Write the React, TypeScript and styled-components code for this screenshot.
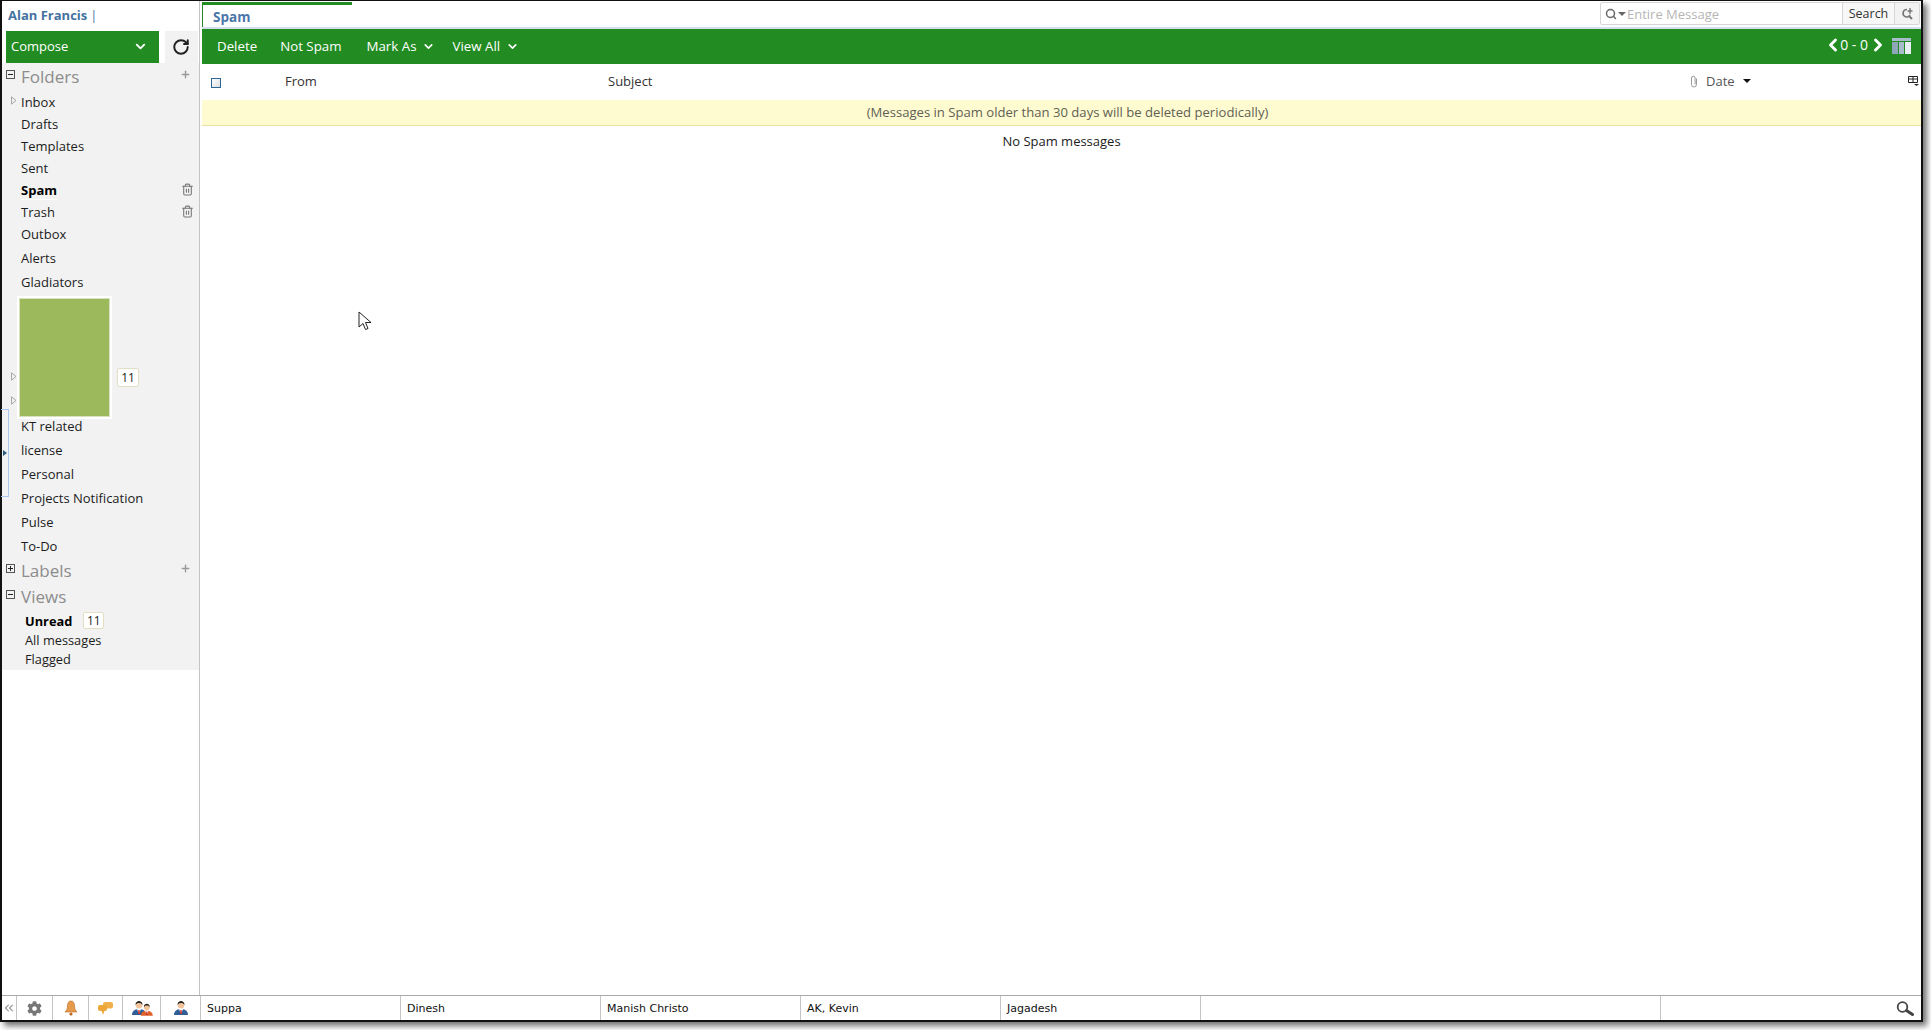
import React from 'react'
import styled, { createGlobalStyle } from 'styled-components'
import { ChevronDown, ChevronLeft, ChevronRight, ChevronsLeft, RotateCw, Plus, Trash2, Search } from 'lucide-react'
import { FaCog } from 'react-icons/fa'

const GlobalStyle = createGlobalStyle`
  html, body {
    margin: 0;
    padding: 0;
    background: #fff;
    overflow: hidden;
  }
  body {
    font-family: "Open Sans", "Liberation Sans", sans-serif;
    font-size: 13px;
    color: #1c1c1c;
  }
`

const Desktop = styled.div`
  width: 1931px;
  height: 1030px;
  box-sizing: border-box;
`

const AppWindow = styled.div`
  width: 1923px;
  height: 1022px;
  box-sizing: border-box;
  border: 1px solid #111;
  border-left-width: 2px;
  border-right-width: 2px;
  border-bottom-width: 2px;
  box-shadow: 4px 4px 6px rgba(0, 0, 0, 0.55);
  display: flex;
  flex-direction: column;
  background: #fff;
  position: relative;
`

const Main = styled.div`
  flex: 1;
  display: flex;
  min-height: 0;
`

const Sidebar = styled.aside`
  width: 197px;
  flex: none;
  border-right: 1px solid #c4c4c4;
  display: flex;
  flex-direction: column;
`

const UserName = styled.div`
  height: 30px;
  padding: 0 0 2px 6px;
  box-sizing: border-box;
  display: flex;
  align-items: center;
  font-weight: 700;
  font-size: 13px;
  color: #45729f;
  span {
    font-weight: 400;
    margin-left: 3px;
  }
`

const ComposeRow = styled.div`
  display: flex;
  height: 32px;
  padding-left: 4px;
  gap: 6px;
`

const ComposeButton = styled.div`
  width: 153px;
  background: #228b22;
  color: #fff;
  font-size: 13px;
  display: flex;
  align-items: center;
  justify-content: space-between;
  padding: 0 11px 2px 5px;
  box-sizing: border-box;
`

const RefreshButton = styled.div`
  width: 33px;
  background: #f2f2f2;
  display: flex;
  align-items: center;
  justify-content: center;
  padding-right: 2px;
  box-sizing: border-box;
  color: #222;
`

const Tree = styled.div`
  background: #f2f2f2;
  height: 607px;
  display: flex;
  flex-direction: column;
  position: relative;
`

const SectionHead = styled.div<{ $height: number }>`
  height: ${(p) => p.$height}px;
  display: flex;
  align-items: center;
  padding: 0 8px 2px 4px;
  box-sizing: border-box;
  font-size: 17px;
  color: #8c8c8c;
  flex: none;
`

const Toggle = styled.span`
  width: 7px;
  height: 7px;
  border: 1px solid #555;
  margin-right: 6px;
  position: relative;
  flex: none;
  top: -2px;
  &::before {
    content: '';
    position: absolute;
    left: 1px;
    right: 1px;
    top: 3px;
    height: 1px;
    background: #222;
  }
`

const PlusToggle = styled(Toggle)`
  &::after {
    content: '';
    position: absolute;
    top: 1px;
    bottom: 1px;
    left: 3px;
    width: 1px;
    background: #222;
  }
`

const HeadLabel = styled.span`
  flex: 1;
`

const AddIcon = styled(Plus)`
  color: #999;
  position: relative;
  top: -2px;
`

const FolderRow = styled.div<{ $height: number; $bold?: boolean }>`
  height: ${(p) => p.$height}px;
  display: flex;
  align-items: center;
  padding: 0 5px 0 19px;
  font-size: 13px;
  font-weight: ${(p) => (p.$bold ? 700 : 400)};
  color: ${(p) => (p.$bold ? '#000' : '#1c1c1c')};
  flex: none;
  position: relative;
`

const FolderLabel = styled.span<{ $underline?: boolean }>`
  margin-right: auto;
  border-bottom: 1px solid ${(p) => (p.$underline ? '#fff' : 'transparent')};
`

const TrashIcon = styled(Trash2)`
  color: #777;
  position: relative;
  top: -1px;
`

const Caret = styled.svg<{ $top: number }>`
  position: absolute;
  left: 9px;
  top: ${(p) => p.$top}px;
`

const MaskedRow = styled.div`
  height: 123px;
  flex: none;
  position: relative;
  display: flex;
  align-items: center;
  padding-left: 15px;
  margin: 2px 0 -5px;
`

const MaskBlock = styled.div`
  width: 89px;
  height: 117px;
  background: #9cba5c;
  border: 3px solid #fff;
  outline: 1px solid #d6e1bd;
  outline-offset: -3px;
  box-sizing: content-box;
`

const Count = styled.span`
  display: inline-flex;
  align-items: center;
  justify-content: center;
  width: 21px;
  height: 17px;
  background: #fff;
  border: 1px solid #e3dfc6;
  border-radius: 2px;
  font-size: 12px;
  font-weight: 400;
  color: #1c1c1c;
  box-sizing: border-box;
`

const MaskCount = styled(Count)`
  width: 22px;
  height: 19px;
  margin-left: 5px;
  margin-top: 40px;
`

const SideHandle = styled.div`
  position: absolute;
  left: -1px;
  top: 346px;
  width: 8px;
  height: 88px;
  border: 1px solid #a9c8ee;
  border-left: none;
  box-sizing: border-box;
  display: flex;
  align-items: center;
  &::after {
    content: '';
    border-left: 4px solid #2b5b7c;
    border-top: 3px solid transparent;
    border-bottom: 3px solid transparent;
    margin-left: 2px;
  }
`

const ViewRow = styled.div<{ $bold?: boolean }>`
  height: 19px;
  display: flex;
  align-items: center;
  padding-left: 23px;
  gap: 11px;
  font-size: 12.8px;
  font-weight: ${(p) => (p.$bold ? 700 : 400)};
  color: ${(p) => (p.$bold ? '#000' : '#1c1c1c')};
  flex: none;
`

const Content = styled.section`
  flex: 1;
  min-width: 0;
  display: flex;
  flex-direction: column;
  padding-left: 2px;
`

const TabBar = styled.div`
  height: 28px;
  flex: none;
  display: flex;
  justify-content: space-between;
  border-bottom: 2px solid #d4def0;
  box-sizing: border-box;
`

const ActiveTab = styled.div`
  width: 150px;
  margin-top: 1px;
  border-top: 3px solid #228b22;
  border-left: 1px solid #228b22;
  padding: 1px 0 0 10px;
  display: flex;
  align-items: center;
  font-weight: 700;
  font-size: 13.5px;
  color: #4a76a8;
  box-sizing: border-box;
`

const SearchBox = styled.div`
  width: 320px;
  height: 23px;
  margin: 1px 1px 0 0;
  border: 1px solid #d6d6d6;
  border-radius: 2px;
  display: flex;
  align-items: center;
  box-sizing: border-box;
`

const SearchGlyph = styled.div`
  width: 26px;
  display: flex;
  align-items: center;
  padding-left: 4px;
  box-sizing: border-box;
  color: #666;
  gap: 1px;
`

const SearchInput = styled.div`
  flex: 1;
  color: #b5b5b5;
  font-size: 13px;
`

const SearchButton = styled.div`
  width: 51px;
  height: 100%;
  border-left: 1px solid #d6d6d6;
  background: #f7f7f7;
  display: flex;
  align-items: center;
  justify-content: center;
  font-size: 12.5px;
  color: #333;
`

const AdvancedButton = styled.div`
  width: 24px;
  height: 100%;
  border-left: 1px solid #d6d6d6;
  background: #f2f2f2;
  display: flex;
  align-items: center;
  justify-content: center;
`

const ToolBar = styled.div`
  height: 35px;
  flex: none;
  background: #228b22;
  color: #fff;
  display: flex;
  align-items: center;
  font-size: 13.3px;
  padding-bottom: 1px;
  box-sizing: border-box;
`

const ToolItem = styled.div<{ $left: number }>`
  display: flex;
  align-items: center;
  gap: 6px;
  margin-left: ${(p) => p.$left}px;
`

const Pager = styled.div`
  margin-left: auto;
  display: flex;
  align-items: center;
  padding: 0 10px 3px 0;
  font-size: 14px;
`

const PagerPrev = styled(ChevronLeft)`
  margin-right: -3px;
`

const ColumnsIcon = styled.svg`
  margin: 3px 0 0 4px;
`

const ListHead = styled.div`
  height: 36px;
  flex: none;
  display: grid;
  grid-template-columns: 83px 323px 1082px 1fr 13px;
  align-items: center;
  font-size: 13px;
  color: #333;
  padding-bottom: 2px;
  box-sizing: border-box;
`

const CheckCell = styled.div`
  padding: 3px 0 0 9px;
  display: flex;
`

const CheckBox = styled.span`
  width: 10px;
  height: 10px;
  box-sizing: border-box;
  border: 1px solid #2f6496;
  background: linear-gradient(135deg, #fff, #ddd);
`

const DateCell = styled.div`
  display: flex;
  align-items: center;
  color: #555;
  gap: 8px;
`

const DownTriangle = styled.span`
  border-top: 4px solid currentColor;
  border-left: 4px solid transparent;
  border-right: 4px solid transparent;
`

const DateTriangle = styled(DownTriangle)`
  color: #111;
`

const Notice = styled.div`
  height: 26px;
  flex: none;
  background: #fffbd0;
  border-bottom: 1px solid #e8e2a0;
  display: flex;
  align-items: center;
  justify-content: center;
  box-sizing: border-box;
  padding: 0 0 2px 12px;
  font-size: 13.1px;
  color: #5f5f55;
`

const EmptyText = styled.div`
  text-align: center;
  padding-top: 6px;
  font-size: 13px;
  color: #1c1c1c;
`

const Pointer = styled.svg`
  position: absolute;
  left: 356px;
  top: 310px;
`

const StatusBar = styled.footer`
  height: 25px;
  flex: none;
  border-top: 1px solid #aaa;
  box-sizing: border-box;
  display: flex;
  font-family: "DejaVu Sans", "Liberation Sans", sans-serif;
  font-size: 11px;
  color: #111;
`

const CollapseCell = styled.div`
  width: 14px;
  flex: none;
  color: #999;
  display: flex;
  align-items: center;
  justify-content: center;
  border-right: 1px solid #c4c4c4;
`

const IconCell = styled.div<{ $width: number }>`
  width: ${(p) => p.$width}px;
  box-sizing: border-box;
  border-right: 1px solid #c4c4c4;
  display: flex;
  align-items: center;
  justify-content: center;
  flex: none;
`

const ChatCell = styled.div<{ $width: number }>`
  width: ${(p) => p.$width}px;
  flex: none;
  box-sizing: border-box;
  border-right: 1px solid #c4c4c4;
  display: flex;
  align-items: center;
  padding-left: 6px;
`

const StatusSearch = styled.div`
  flex: 1;
  display: flex;
  align-items: center;
  justify-content: flex-end;
  padding-right: 7px;
`

const Person = ({ x = 0, color = '#2f5f96', scale = 1 }: { x?: number; color?: string; scale?: number }) => (
  <g transform={`translate(${x} ${scale === 1 ? 0 : 3}) scale(${scale})`}>
    <path d="M1 15c0-4 3-6 7-6s7 2 7 6z" fill={color} />
    <path d="M6 9l2 5 2-5z" fill="#fff" />
    <path d="M7.400 10h1.200l.4 4H7z" fill="#c9302c" />
    <circle cx="8" cy="5" r="3.400" fill="#f0c39a" />
    <path d="M4.500 5c0-3 2-4 3.500-4s3.500 1 3.500 4c-1-1.500-2-2-3.500-2s-2.500.5-3.500 2z" fill="#222" />
  </g>
)

const HollowCaret = ({ top }: { top: number }) => (
  <Caret $top={top} width="6" height="9" viewBox="0 0 6 9">
    <path d="M.5.800v7.400L5 4.500z" fill="none" stroke="#a8a8a8" />
  </Caret>
)

const folders: { name: string; height: number; caret?: boolean; bold?: boolean; trash?: boolean }[] = [
  { name: 'Inbox', height: 22, caret: true },
  { name: 'Drafts', height: 22 },
  { name: 'Templates', height: 22 },
  { name: 'Sent', height: 22 },
  { name: 'Spam', height: 22, bold: true, trash: true },
  { name: 'Trash', height: 22, trash: true },
  { name: 'Outbox', height: 23 },
  { name: 'Alerts', height: 24 },
  { name: 'Gladiators', height: 24 },
]

const lowerFolders = ['KT related', 'license', 'Personal', 'Projects Notification', 'Pulse', 'To-Do']
const chats = ['Suppa', 'Dinesh', 'Manish Christo', 'AK, Kevin', 'Jagadesh', '']

const App: React.FunctionComponent = () => {
  return (
    <Desktop>
      <GlobalStyle />
      <AppWindow>
        <Main>
          <Sidebar>
            <UserName>
              Alan Francis<span>|</span>
            </UserName>
            <ComposeRow>
              <ComposeButton>
                Compose
                <ChevronDown size={15} strokeWidth={3} />
              </ComposeButton>
              <RefreshButton>
                <RotateCw size={18} strokeWidth={2.6} />
              </RefreshButton>
            </ComposeRow>
            <Tree>
              <SectionHead $height={28}>
                <Toggle />
                <HeadLabel>Folders</HeadLabel>
                <AddIcon size={11} strokeWidth={3} />
              </SectionHead>
              {folders.map((f) => (
                <FolderRow key={f.name} $height={f.height} $bold={f.bold}>
                  {f.caret && <HollowCaret top={5} />}
                  <FolderLabel $underline={f.bold}>{f.name}</FolderLabel>
                  {f.trash && <TrashIcon size={13} />}
                </FolderRow>
              ))}
              <MaskedRow>
                <HollowCaret top={76} />
                <HollowCaret top={100} />
                <MaskBlock />
                <MaskCount>11</MaskCount>
              </MaskedRow>
              {lowerFolders.map((name) => (
                <FolderRow key={name} $height={24}>
                  <FolderLabel>{name}</FolderLabel>
                </FolderRow>
              ))}
              <SectionHead $height={26}>
                <PlusToggle />
                <HeadLabel>Labels</HeadLabel>
                <AddIcon size={11} strokeWidth={3} />
              </SectionHead>
              <SectionHead $height={27}>
                <Toggle />
                <HeadLabel>Views</HeadLabel>
              </SectionHead>
              <ViewRow $bold>
                Unread
                <Count>11</Count>
              </ViewRow>
              <ViewRow>All messages</ViewRow>
              <ViewRow>Flagged</ViewRow>
              <SideHandle />
            </Tree>
          </Sidebar>
          <Content>
            <TabBar>
              <ActiveTab>Spam</ActiveTab>
              <SearchBox>
                <SearchGlyph>
                  <Search size={12} strokeWidth={3} />
                  <DownTriangle />
                </SearchGlyph>
                <SearchInput>Entire Message</SearchInput>
                <SearchButton>Search</SearchButton>
                <AdvancedButton>
                  <svg width="12" height="13" viewBox="0 0 12 13">
                    <path d="M6 2.500a3.700 3.700 0 1 0 3 5.500" fill="none" stroke="#777" strokeWidth="1.600" />
                    <path d="M8 9l3 3" stroke="#777" strokeWidth="2" />
                    <path d="M9 1v6M6.500 4h5" stroke="#777" strokeWidth="1.400" />
                  </svg>
                </AdvancedButton>
              </SearchBox>
            </TabBar>
            <ToolBar>
              <ToolItem $left={15}>Delete</ToolItem>
              <ToolItem $left={23}>Not Spam</ToolItem>
              <ToolItem $left={25}>
                Mark As
                <ChevronDown size={13} strokeWidth={3} />
              </ToolItem>
              <ToolItem $left={17}>
                View All
                <ChevronDown size={13} strokeWidth={3} />
              </ToolItem>
              <Pager>
                <PagerPrev size={20} strokeWidth={3.5} />
                0 - 0
                <ChevronRight size={20} strokeWidth={3.5} />
                <ColumnsIcon width={19} height={16} viewBox="0 0 19 16">
                  <rect x="0" y="0" width="19" height="3" fill="#a9bccb" />
                  <rect x="0" y="4" width="6" height="12" fill="#8ea6ba" />
                  <rect x="7" y="4" width="5" height="12" fill="#a9bccb" />
                  <rect x="13" y="4" width="6" height="12" fill="#e8eef3" />
                </ColumnsIcon>
              </Pager>
            </ToolBar>
            <ListHead>
              <CheckCell>
                <CheckBox />
              </CheckCell>
              <div>From</div>
              <div>Subject</div>
              <DateCell>
                <svg width="8" height="13" viewBox="0 0 8 13">
                  <path d="M6.500 3.500v6a2.500 2.500 0 0 1-5 0V3a1.800 1.800 0 0 1 3.600 0v6.500" fill="none" stroke="#999" />
                </svg>
                Date
                <DateTriangle />
              </DateCell>
              <svg width="11" height="10" viewBox="0 0 11 10">
                <path d="M.5.500h9v6h-9zM.5 3h9M5 .5v6" fill="none" stroke="#222" />
                <path d="M6 8h5l-2.500 2z" fill="#222" />
              </svg>
            </ListHead>
            <Notice>(Messages in Spam older than 30 days will be deleted periodically)</Notice>
            <EmptyText>No Spam messages</EmptyText>
          </Content>
        </Main>
        <StatusBar>
          <CollapseCell>
            <ChevronsLeft size={14} />
          </CollapseCell>
          <IconCell $width={36}>
            <FaCog size={15} color="#777" />
          </IconCell>
          <IconCell $width={36}>
            <svg width="14" height="16" viewBox="0 0 14 16">
              <path d="M7 1c2.500 0 3.500 2 3.500 5 0 3 1 4.500 2.500 6H1c1.500-1.500 2.500-3 2.500-6 0-3 1-5 3.500-5z" fill="#e59a4c" stroke="#b9691f" strokeWidth=".6" />
              <circle cx="7" cy="14" r="1.600" fill="#b9691f" />
            </svg>
          </IconCell>
          <IconCell $width={34}>
            <svg width="15" height="15" viewBox="0 0 15 15">
              <rect x="5" y="1" width="10" height="6.500" rx="2" fill="#f2b04a" />
              <rect x="0" y="4" width="9" height="6" rx="2" fill="#eda63a" />
              <path d="M3.500 9.500h3L5 14z" fill="#eda63a" />
            </svg>
          </IconCell>
          <IconCell $width={38}>
            <svg width="22" height="16" viewBox="0 0 22 16">
              <Person />
              <Person x={9} color="#e0602a" scale={0.85} />
            </svg>
          </IconCell>
          <IconCell $width={40}>
            <svg width="16" height="16" viewBox="0 0 16 16">
              <Person />
            </svg>
          </IconCell>
          {chats.map((c, i) => (
            <ChatCell key={i} $width={i === 5 ? 460 : 200}>
              {c}
            </ChatCell>
          ))}
          <StatusSearch>
            <svg width="18" height="15" viewBox="0 0 18 15">
              <circle cx="6.500" cy="6" r="4.800" fill="none" stroke="#444" strokeWidth="1.800" />
              <path d="M10.500 9.500l6 4" stroke="#444" strokeWidth="3" strokeLinecap="round" />
            </svg>
          </StatusSearch>
        </StatusBar>
        <Pointer width="14" height="20" viewBox="0 0 14 20">
          <path d="M1 1v15l4-3.500 2.500 6 2.500-1-2.500-6H13z" fill="#fff" stroke="#222" strokeWidth="1" />
        </Pointer>
      </AppWindow>
    </Desktop>
  )
}

export default App
